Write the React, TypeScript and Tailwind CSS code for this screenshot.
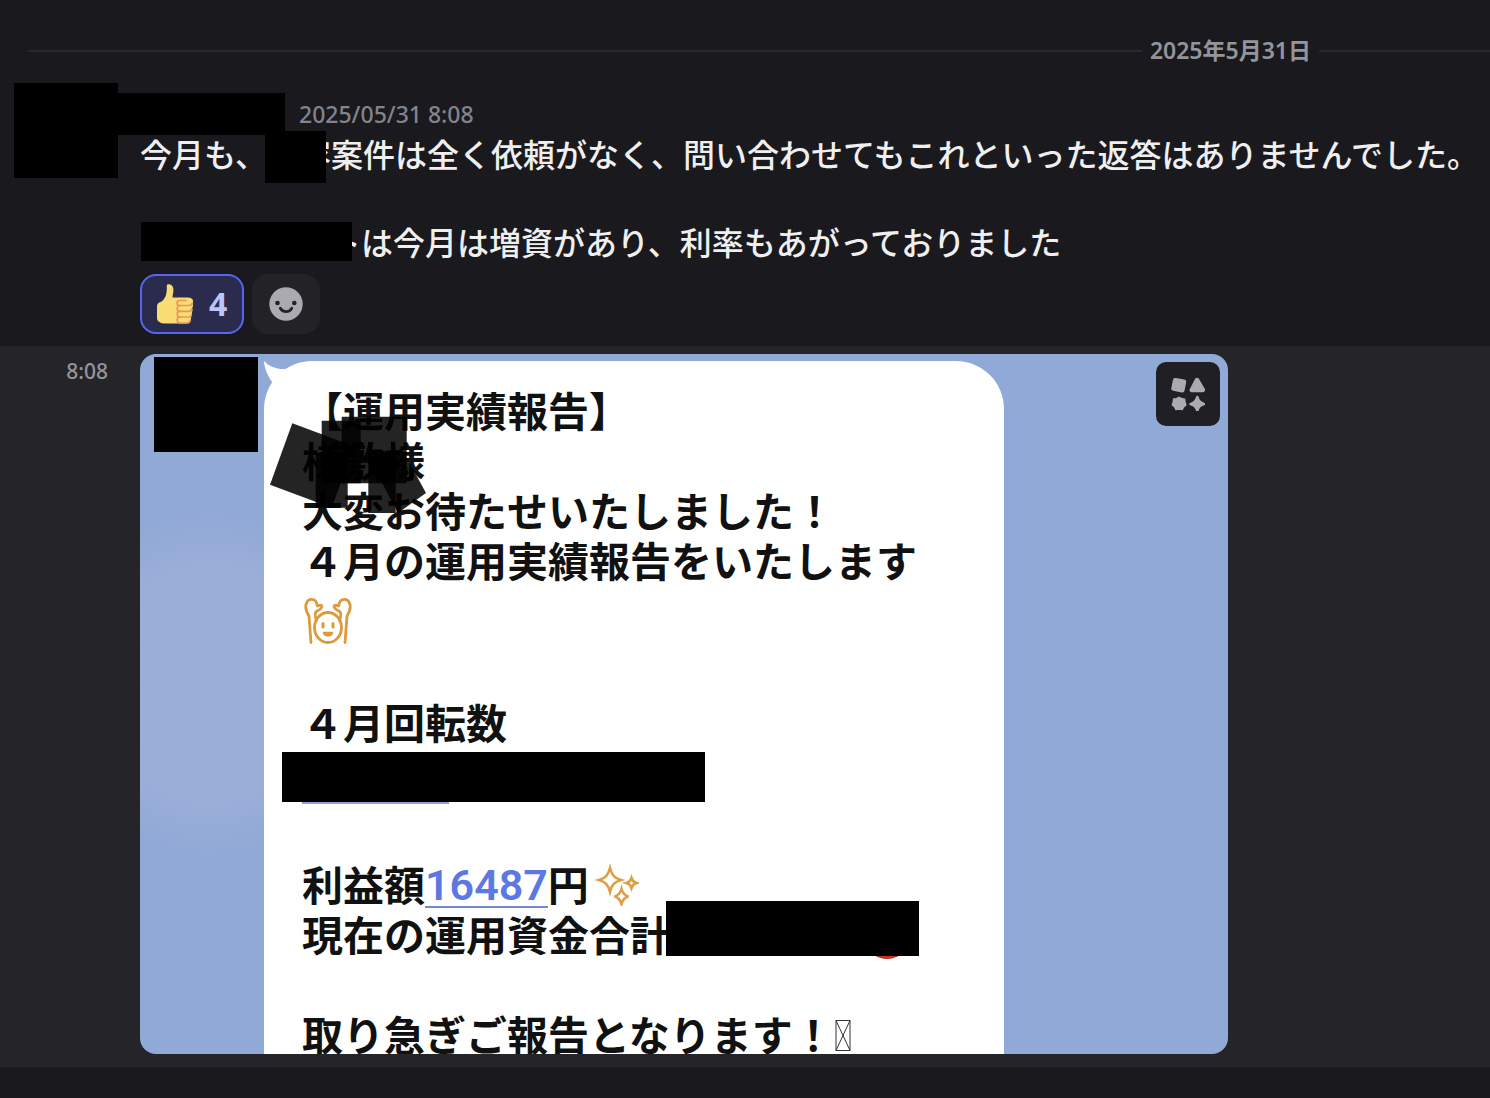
import type { ReactNode } from 'react';

const messageLines = [
  { id: 1, text: '今月も、内容案件は全く依頼がなく、問い合わせてもこれといった返答はありませんでした。' },
  { id: 2, text: '' },
];

function DateDivider({ label }: { label: string }) {
  return (
    <div className="flex items-center pl-7 pt-7">
      <div className="mt-0.5 h-0.5 flex-1 bg-[#29292d]" />
      <h2 className="px-2 text-[23px] leading-[44px] font-semibold text-[#94959c]">{label}</h2>
      <div className="mt-0.5 h-0.5 w-[171px] bg-[#29292d]" />
    </div>
  );
}

function ThumbsUp() {
  return (
    <svg viewBox="0 0 36 40" className="h-10 w-9" aria-hidden="true">
      <path
        fill="#fadc75"
        d="M9.8 1.6C9.8.5 11.5 0 13 .5c2.6.8 3.4 2.8 3.4 5.5 0 3-.9 5-.8 7.5h14.900c3.7 0 5.500 1.300 5.500 3.500v4c0 1.500-.5 2.500-1 3.200.6 1 .7 3-.2 4.300.4 1.300.2 3-.7 4 .1 3.500-.8 7-4.600 7H6.500C2 38.800 0 36.500 0 34V22.500c0-2.500 1.200-3.500 3-4.200C8.500 16 10.200 10 9.800 1.600z"
      />
      <g fill="none" stroke="#e39a5b" strokeWidth="1.700" strokeLinecap="round" strokeLinejoin="round">
        <path d="M29 16.500h-6.500c-3.300 0-3.300 5 0 5h10c1.500 0 2.500-1 2.700-2.500" />
        <path d="M22.500 21.500c-3 0-3 5.800 0 5.800h9.500c1.700 0 2.500-1 2.800-2.500" />
        <path d="M22.500 27.300c-3 0-3 5.700 0 5.700h9.500c1.500 0 2.200-.9 2.400-2.300" />
        <path d="M22.500 33c-3 0-3 6 0 6H30c2 0 3-1 3.300-2.800" />
      </g>
    </svg>
  );
}

function SmileFace() {
  return (
    <svg viewBox="0 0 34 34" className="h-[34px] w-[34px]" aria-hidden="true">
      <circle cx="17" cy="17" r="16.700" fill="#abaab1" />
      <circle cx="8.500" cy="16" r="2.300" fill="#232327" />
      <circle cx="25.300" cy="16" r="2.300" fill="#232327" />
      <path d="M11.300 21.300c2.500 4.400 9 4.400 11.400 0" fill="none" stroke="#232327" strokeWidth="2.800" strokeLinecap="round" />
    </svg>
  );
}

function ShapesIcon() {
  return (
    <svg viewBox="0 0 34 34" className="h-[34px] w-[34px]" fill="#abaab1" stroke="#abaab1" strokeLinejoin="round" aria-hidden="true">
      <path d="M4.200 3.200 13 4.800 11.300 13.200 2.500 11.500z" strokeWidth="4.500" />
      <path d="M26 3 20.800 13h11z" strokeWidth="4.500" />
      <path d="M8 20.500l2.600 1.200 2.900.6.3 3 .9 2.500-2.200 2-1.300 2.500-3.200-.4-3 .4-1.200-2.600-2.300-2 1-2.600.2-2.900 2.800-.4z" strokeWidth="1.800" />
      <path d="M26.300 20c1.400 4.200 2.400 5.300 6.700 7-4.300 1.500-5.300 2.500-6.700 6.500-1.500-4-2.500-5-6.800-6.500 4.300-1.700 5.300-2.800 6.800-7z" strokeWidth="2.400" />
    </svg>
  );
}

function RaisedHands() {
  return (
    <svg viewBox="0 0 48 48" className="h-12 w-12" fill="none" stroke="#dd9a3c" strokeWidth="2.800" strokeLinecap="round" strokeLinejoin="round" aria-hidden="true">
      <path d="M7 45.500 5 19C2.500 15 1 9.500 2.500 6 4 2 9.500 1 12 4.500c1 1.500.5 3.500 1.500 4.500 1.500-.5 3-1.500 4-.5 1.300 1.800-1 4-4.500 5.500-1.500 1-2 2.500-1.800 4L12.300 24" />
      <path d="M41 45.500l2-26.500c2.500-4 4-9.500 2.500-13C44 2 38.500 1 36 4.500c-1 1.500-.5 3.500-1.500 4.500-1.500-.5-3-1.500-4-.5-1.300 1.800 1 4 4.500 5.500 1.500 1 2 2.500 1.800 4L35.700 24" />
      <ellipse cx="24" cy="30.500" rx="13.500" ry="15" />
      <path d="M19 26.500v3.500M29 26.500v3.500" strokeWidth="3" />
      <path d="M19.500 35.500h9c-.5 4.500-8.500 4.500-9 0z" fill="#dd9a3c" strokeWidth="1.500" />
    </svg>
  );
}

function Sparkles() {
  return (
    <svg viewBox="0 0 44 42" className="h-[42px] w-11" fill="none" stroke="#dd9f45" strokeWidth="2.600" strokeLinejoin="miter" aria-hidden="true">
      <path d="M15 4c2 7.500 4.500 10 11 12-6.500 2-9 4.500-11 12-2-7.500-4.500-10-11-12 6.500-2 9-4.500 11-12z" />
      <path d="M36.500 14c1 3.200 2 4.200 5 5-3 .8-4 1.800-5 5-1-3.200-2-4.200-5-5 3-.8 4-1.800 5-5z" />
      <path d="M26.500 25c1.200 4.500 3 6.500 7 7.500-4 1-5.800 3-7 7.500-1.200-4.500-3-6.500-7-7.500 4-1 5.800-3 7-7.500z" />
    </svg>
  );
}

function MissingGlyph() {
  return (
    <svg viewBox="0 0 18 34" className="h-[34px] w-[18px]" fill="none" stroke="#333" strokeWidth="1" aria-hidden="true">
      <path d="M2 2.500h14v30H2zM2 2.500l14 30M16 2.500l-14 30" />
    </svg>
  );
}

// Marker strokes over the recipient's name
function Scribble() {
  return (
    <svg viewBox="0 0 160 102" className="absolute left-1.5 top-[52px] h-[102px] w-40" fill="#000" fillOpacity="0.86" aria-hidden="true">
      <path d="M22.300 10.300 84 33.300 61.700 94.700 0 71.700z" />
      <path d="M51.700 7.700h39v62.600h-39z" />
      <path d="M45.700 40h32v54.700h-32z" />
      <path d="M71.700 3.700h65v66.600h-65z" />
      <path d="M98.300 38h27.400v62H98.300z" />
      <path d="M98.300 44 132 36l24 44-28 20z" />
    </svg>
  );
}

function Line({ children }: { children?: ReactNode }) {
  return <p className="h-[50px] whitespace-nowrap">{children}</p>;
}

function ReportPicture() {
  return (
    <div className="relative flex h-[700px] w-[1088px] max-w-full items-start overflow-hidden rounded-2xl bg-[#91a9d6] bg-[radial-gradient(ellipse_150px_170px_at_70px_330px,#9bafd9_0%,#9aaed8_70%,transparent_100%)] pl-3.5">
      <div className="mt-[3px] h-[95px] w-[104px] shrink-0 bg-black" />
      <div className="relative ml-1.5 mt-[7px] h-[693px] w-[740px] shrink-0 rounded-t-[48px] bg-white pl-[38px] pt-[25px] text-[41px] leading-[50px] font-bold text-[#111]">
        <svg viewBox="0 0 48 40" className="absolute left-0 top-0 h-10 w-12" fill="#fff" aria-hidden="true">
          <path d="M0 0c5 5.500 13 8.500 21 8l20-4-30 34-3-17C4 15 .5 8 0 0z" />
        </svg>
        <Line>【運用実績報告】</Line>
        <Line>様敷様</Line>
        <Line>大変お待たせいたしました！</Line>
        <Line>４月の運用実績報告をいたします</Line>
        <div className="flex h-[62px] items-center pl-0.5 pt-2">
          <RaisedHands />
        </div>
        <Line />
        <Line>４月回転数</Line>
        <div className="relative h-[50px]">
          <div className="absolute left-0 top-[54px] h-0.5 w-[147px] bg-[#8ea0d8]" />
          <div className="absolute -left-5 top-1 h-[50px] w-[423px] bg-black" />
        </div>
        <Line />
        <div className="flex h-[62px] items-center pt-3 whitespace-nowrap">
          <span>利益額</span>
          <a href="#profit" className="h-[46px] border-b-2 border-[#7089cf] font-['Roboto'] text-[43px] leading-[46px] font-semibold text-[#5b78e3]">16487</a>
          <span>円</span>
          <span className="ml-1.5">
            <Sparkles />
          </span>
        </div>
        <div className="relative">
          <Line>現在の運用資金合計</Line>
          <div className="absolute left-[566px] top-[18px] h-[31px] w-[38px] rounded-[50%] bg-[#c8301f]" />
          <div className="absolute left-[364px] top-[-9px] h-[55px] w-[253px] bg-black" />
        </div>
        <Line />
        <div className="flex h-[50px] items-center whitespace-nowrap">
          <span>取り急ぎご報告となります！</span>
          <MissingGlyph />
        </div>
        <Scribble />
      </div>
      <button type="button" aria-label="アプリ" className="absolute right-2 top-2 flex h-16 w-16 items-center justify-center rounded-[10px] bg-[#202024]">
        <ShapesIcon />
      </button>
    </div>
  );
}

export default function App() {
  return (
    <main lang="ja" className="min-h-screen overflow-hidden bg-[#1a1a1e] font-['Noto_Sans','Noto_Sans_CJK_JP',sans-serif] text-[#efeff0]">
      <DateDivider label="2025年5月31日" />

      <article className="flex gap-[22px] pb-3 pl-3.5 pt-[11px]">
        <div className="h-[95px] w-[104px] shrink-0 bg-black" />
        <div className="min-w-0 flex-1">
          <header className="flex items-center pt-2.5">
            <div className="-ml-[22px] h-[42px] w-[167px] shrink-0 bg-black" />
            <time className="ml-3.5 text-[23px] leading-[42px] font-medium text-[#82838b]">2025/05/31 8:08</time>
          </header>
          <div className="-mt-0.5 text-[32px] leading-[44px] font-medium whitespace-nowrap">
            {messageLines.map((line) => (
              <p key={line.id} className="relative h-11">
                {line.text}
                {line.text && <span className="absolute left-[125px] top-[-2px] h-[52px] w-[61px] bg-black" />}
              </p>
            ))}
            <p className="relative h-11 pl-[189px]">
              トは今月は増資があり、利率もあがっておりました
              <span className="absolute left-px top-px h-[39px] w-[211px] bg-black" />
            </p>
          </div>
          <div className="mt-[9px] flex gap-2">
            <button type="button" className="flex h-[60px] w-[104px] items-center gap-4 rounded-2xl border-2 border-[#5865f2] bg-[#2a2b4d] pl-[15px]">
              <ThumbsUp />
              <span className="text-[32px] leading-10 font-bold text-[#bcc5fb]">4</span>
            </button>
            <button type="button" aria-label="リアクションを付ける" className="flex h-[60px] w-[68px] items-center justify-center rounded-2xl bg-[#232327]">
              <SmileFace />
            </button>
          </div>
        </div>
      </article>

      <article className="flex bg-[#242429] pb-[13px] pt-2">
        <time className="w-[140px] shrink-0 pr-8 text-right text-[21px] leading-[34px] font-medium text-[#94959c]">8:08</time>
        <ReportPicture />
      </article>
    </main>
  );
}
